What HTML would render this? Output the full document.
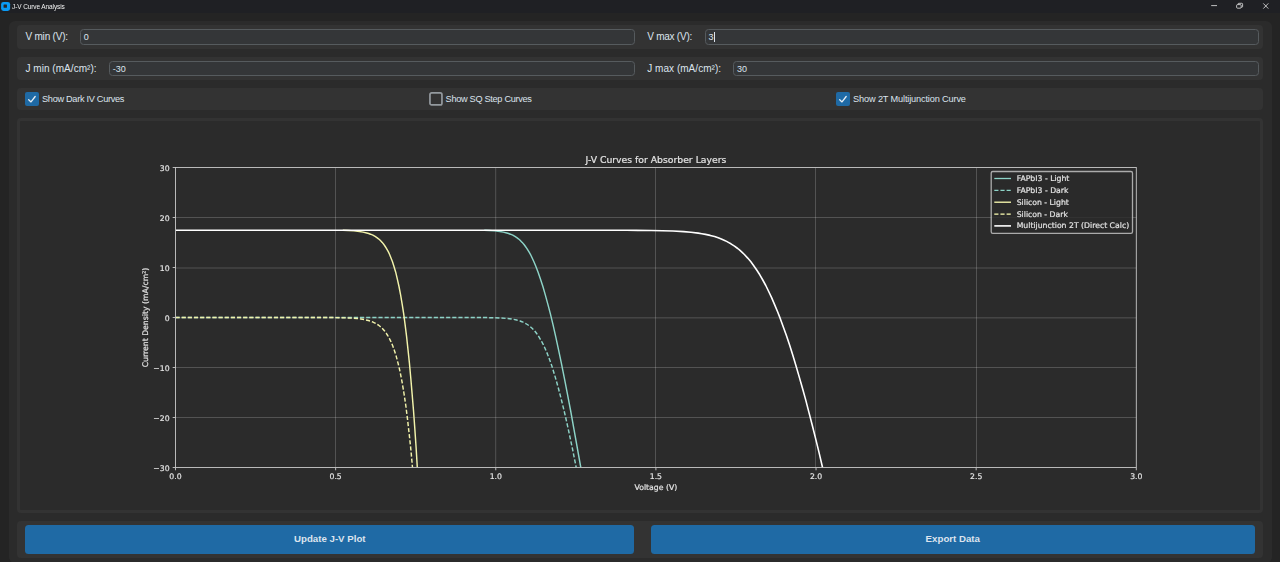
<!DOCTYPE html>
<html lang="en">
<head>
<meta charset="utf-8">
<title>J-V Curve Analysis</title>
<style>
*{box-sizing:border-box;margin:0;padding:0}
html,body{width:1280px;height:562px;overflow:hidden;background:#242424}
body{position:relative;font-family:"Liberation Sans",Arial,sans-serif;color:#dce4ee}
.abs{position:absolute}
.titlebar{left:0;top:0;width:1280px;height:12.5px;background:#1f2024}
.tb-icon{left:1.1px;top:1.9px;width:9px;height:9px;border:2.5px solid #0a9bf5;border-radius:2.6px;background:#2a2322}
.tb-title{left:12.4px;top:2.6px;font-size:6.5px;line-height:8px;color:#f2f2f2;white-space:nowrap;letter-spacing:-0.1px;will-change:transform}
.outer{left:8.8px;top:21.1px;width:1263.2px;height:541.9px;background:#2b2b2b;border-radius:6px}
.row{left:17px;width:1246px;background:#333333;border-radius:4px}
.lbl{font-size:10px;line-height:12px;white-space:nowrap;color:#dce4ee}
.entry{height:15.4px;background:#343638;border:1px solid #565b5e;border-radius:3.5px;font-size:9px;line-height:13.4px;padding-left:2.8px;padding-top:0.8px;color:#dce4ee;white-space:nowrap}
.cb{width:13.6px;height:13.6px;border-radius:2px}
.cb.on{background:#1f6aa5}
.cb.off{border:1.7px solid #949a9f}
.cblbl{font-size:9.2px;line-height:12px;white-space:nowrap;color:#dce4ee}
.btn{top:524.9px;height:28.8px;background:#1f6aa5;border-radius:3.5px;font-weight:bold;font-size:9.7px;line-height:28.9px;text-align:center;color:#dce4ee;white-space:nowrap}
.plotframe{left:17px;top:118.2px;width:1246px;height:394.7px;background:#333333;border-radius:4px}
.canvas{left:20px;top:121px;width:1240px;height:389px;background:#2b2b2b;border-radius:1px}
svg.plot{position:absolute;left:0;top:0;will-change:transform}
</style>
</head>
<body>
<div class="abs titlebar"></div>
<svg class="abs" style="left:0;top:0" width="12" height="13" viewBox="0 0 12 13"><rect x="1.1" y="1.9" width="9" height="9" rx="2.4" fill="#0a9bf5"/><rect x="3.55" y="4.6" width="3.4" height="3.2" rx="0.5" fill="#2a2525"/></svg>
<div class="abs tb-title">J-V Curve Analysis</div>
<svg class="abs" style="left:1208px;top:0" width="72" height="13" viewBox="0 0 72 13" fill="none" stroke="#e8e8e8" stroke-width="0.8">
  <path d="M3.2,5.6 H9"/>
  <rect x="28.6" y="4.6" width="4.6" height="3.6" rx="1"/>
  <path d="M30,4.6 V4.2 a0.9,0.9 0 0 1 0.9,-0.9 H33.7 a0.9,0.9 0 0 1 0.9,0.9 V6.4 a0.9,0.9 0 0 1 -0.9,0.9 H33.3"/>
  <path d="M55.3,3.4 L60.3,8.6 M60.3,3.4 L55.3,8.6"/>
</svg>

<div class="abs outer"></div>

<!-- row 1 -->
<div class="abs row" style="top:25.2px;height:23.5px"></div>
<div class="abs lbl" style="left:25.4px;top:31.4px;letter-spacing:-0.19px">V min (V):</div>
<div class="abs entry" style="left:80px;top:29.2px;width:554.8px">0</div>
<div class="abs lbl" style="left:647.2px;top:31.4px;letter-spacing:-0.24px">V max (V):</div>
<div class="abs entry" style="left:704.6px;top:29.2px;width:554px">3<span style="display:inline-block;width:0.8px;height:10px;background:#dce4ee;vertical-align:-1.6px;margin-left:0.6px"></span></div>

<!-- row 2 -->
<div class="abs row" style="top:56.8px;height:23.4px"></div>
<div class="abs lbl" style="left:25.4px;top:63px;letter-spacing:0.05px">J min (mA/cm²):</div>
<div class="abs entry" style="left:109px;top:60.8px;width:525.8px">-30</div>
<div class="abs lbl" style="left:647.2px;top:63px;letter-spacing:0.04px">J max (mA/cm²):</div>
<div class="abs entry" style="left:733.2px;top:60.8px;width:525.4px">30</div>

<!-- row 3 -->
<div class="abs row" style="top:88.1px;height:21.8px"></div>
<div class="abs cb on" style="left:25.2px;top:92.2px"></div>
<svg class="abs" style="left:25.2px;top:92.2px" width="13.6" height="13.6" viewBox="0 0 13.6 13.6"><path d="M3.7,7.8 L6.0,9.9 L10.2,4.5" fill="none" stroke="#e9eff5" stroke-width="1.3" stroke-linecap="round" stroke-linejoin="round"/></svg>
<div class="abs cblbl" style="left:42px;top:93px;letter-spacing:-0.3px">Show Dark IV Curves</div>
<svg class="abs" style="left:428.9px;top:92.2px" width="14" height="14" viewBox="0 0 14 14"><rect x="0.95" y="0.95" width="12" height="12" rx="1.7" fill="none" stroke="#949a9f" stroke-width="1.7"/></svg>
<div class="abs cblbl" style="left:445.6px;top:93px;letter-spacing:-0.31px">Show SQ Step Curves</div>
<div class="abs cb on" style="left:836.3px;top:92.2px"></div>
<svg class="abs" style="left:836.3px;top:92.2px" width="13.6" height="13.6" viewBox="0 0 13.6 13.6"><path d="M3.7,7.8 L6.0,9.9 L10.2,4.5" fill="none" stroke="#e9eff5" stroke-width="1.3" stroke-linecap="round" stroke-linejoin="round"/></svg>
<div class="abs cblbl" style="left:853.1px;top:93px;letter-spacing:-0.15px">Show 2T Multijunction Curve</div>

<!-- plot -->
<div class="abs plotframe"></div>
<div class="abs canvas"></div>
<svg class="plot" width="1280" height="562" viewBox="0 0 1280 562">
<g stroke="#ffffff" stroke-opacity="0.28" stroke-width="0.7" fill="none">
<path d="M335.5,167.5 V467.5"/>
<path d="M495.7,167.5 V467.5"/>
<path d="M655.5,167.5 V467.5"/>
<path d="M815.5,167.5 V467.5"/>
<path d="M976.5,167.5 V467.5"/>
<path d="M175.5,217.5 H1136.3"/>
<path d="M175.5,268.0 H1136.3"/>
<path d="M175.5,317.85 H1136.3"/>
<path d="M175.5,367.5 H1136.3"/>
<path d="M175.5,417.5 H1136.3"/>
</g>
<clipPath id="ax"><rect x="175.5" y="167.5" width="960.8" height="300.0"/></clipPath>
<g clip-path="url(#ax)" fill="none" stroke-linejoin="round">
<path d="M484.3,230.3 L489.4,230.5 L494.6,230.9 L499.8,231.5 L503.3,232.1 L506.9,233.0 L508.6,233.5 L510.4,234.2 L512.8,235.2 L514.9,236.4 L516.8,237.6 L518.4,238.8 L519.8,240.0 L522.2,242.4 L524.2,244.8 L525.1,246.0 L526.8,248.4 L529.0,251.9 L530.4,254.3 L531.6,256.7 L533.8,261.5 L535.8,266.2 L538.1,272.2 L540.6,279.4 L542.9,286.5 L545.3,294.9 L547.9,304.4 L550.4,313.9 L553.0,324.7 L555.7,336.6 L558.5,349.7 L561.3,362.8 L564.4,378.3 L567.4,393.8 L570.6,410.5 L573.8,428.4 L580.8,467.5" stroke="#8dd3c7" stroke-width="1.45"/>
<path d="M175.5,317.5 L452.9,317.5 L475.2,317.5 L487.2,317.6 L494.0,317.8 L500.9,318.0 L506.1,318.4 L509.6,318.7 L513.1,319.3 L516.6,320.0 L518.3,320.5 L520.1,321.0 L521.9,321.7 L523.8,322.5 L525.7,323.5 L528.1,325.0 L530.1,326.5 L531.8,328.0 L533.3,329.5 L534.7,331.0 L536.5,333.3 L538.1,335.5 L539.5,337.8 L541.3,340.8 L542.9,343.8 L544.3,346.8 L546.0,350.6 L547.6,354.4 L549.0,358.1 L550.7,362.6 L552.2,367.1 L555.2,376.9 L558.4,388.2 L561.7,401.0 L565.2,415.3 L568.7,431.1 L572.4,448.4 L576.2,467.5" stroke="#8dd3c7" stroke-width="1.45" stroke-dasharray="4.15 2.0"/>
<path d="M342.8,230.3 L348.3,230.5 L353.9,230.9 L359.4,231.5 L363.1,232.1 L366.8,233.0 L368.7,233.5 L370.5,234.2 L372.9,235.2 L375.1,236.4 L376.9,237.6 L378.5,238.8 L379.9,240.0 L381.1,241.2 L382.2,242.4 L384.1,244.8 L384.9,246.0 L386.4,248.4 L388.4,251.9 L389.5,254.3 L390.5,256.7 L392.4,261.5 L393.9,266.2 L395.7,272.2 L397.4,279.4 L399.0,286.5 L400.6,294.9 L402.2,304.4 L403.7,313.9 L405.1,324.7 L406.6,336.6 L408.0,349.7 L409.4,362.8 L410.8,378.3 L412.1,393.8 L413.5,410.5 L414.8,428.4 L416.1,447.5 L417.3,467.5" stroke="#f2f3ab" stroke-width="1.45"/>
<path d="M175.5,317.5 L316.6,317.5 L335.1,317.6 L346.1,317.9 L351.7,318.1 L357.2,318.5 L360.9,319.0 L364.6,319.6 L368.3,320.5 L370.2,321.0 L372.1,321.7 L374.4,322.8 L375.9,323.5 L377.1,324.3 L378.3,325.0 L380.2,326.5 L381.9,328.0 L383.3,329.5 L384.6,331.0 L386.3,333.3 L387.7,335.5 L389.0,337.8 L390.2,340.1 L391.6,343.1 L392.8,346.1 L393.9,349.1 L394.9,352.1 L396.1,355.9 L397.1,359.6 L398.1,363.4 L399.2,367.9 L400.2,372.4 L402.1,382.2 L404.0,393.5 L405.8,405.5 L407.5,419.1 L409.2,434.1 L410.9,449.9 L412.5,467.5" stroke="#f2f3ab" stroke-width="1.45" stroke-dasharray="4.15 2.0"/>
<path d="M175.5,230.2 L587.4,230.2 L626.6,230.3 L651.5,230.5 L662.2,230.7 L673.0,231.0 L683.7,231.6 L690.9,232.3 L698.2,233.1 L701.8,233.7 L705.5,234.4 L710.2,235.4 L714.6,236.6 L718.2,237.8 L721.3,239.0 L724.1,240.2 L726.6,241.4 L728.8,242.6 L730.9,243.8 L734.5,246.1 L737.7,248.5 L739.2,249.7 L741.9,252.1 L744.4,254.5 L747.7,258.1 L750.7,261.6 L753.4,265.2 L756.7,270.0 L759.8,274.8 L762.5,279.5 L765.8,285.5 L768.7,291.5 L771.5,297.4 L774.6,304.6 L777.6,311.7 L780.4,318.9 L783.4,327.2 L786.4,335.6 L789.6,345.1 L792.6,354.6 L795.9,365.4 L799.0,376.1 L802.4,388.0 L805.7,399.9 L808.8,411.9 L812.2,425.0 L815.5,438.1 L819.0,452.4 L822.6,467.7" stroke="#ffffff" stroke-width="1.6"/>
</g>
<rect x="175.5" y="167.5" width="960.8" height="300.0" fill="none" stroke="#c8c8c8" stroke-width="0.9"/>
<g stroke="#c8c8c8" stroke-width="0.9">
<path d="M175.5,467.5 v2.8"/>
<path d="M335.6333333333333,467.5 v2.8"/>
<path d="M495.76666666666665,467.5 v2.8"/>
<path d="M655.8999999999999,467.5 v2.8"/>
<path d="M816.0333333333333,467.5 v2.8"/>
<path d="M976.1666666666666,467.5 v2.8"/>
<path d="M1136.2999999999997,467.5 v2.8"/>
<path d="M175.5,167.5 h-2.8"/>
<path d="M175.5,217.5 h-2.8"/>
<path d="M175.5,267.5 h-2.8"/>
<path d="M175.5,317.5 h-2.8"/>
<path d="M175.5,367.5 h-2.8"/>
<path d="M175.5,417.5 h-2.8"/>
<path d="M175.5,467.5 h-2.8"/>
</g>
<g font-family="'DejaVu Sans', sans-serif" font-size="7.73" fill="#e4e4e4" stroke="#e4e4e4" stroke-width="0.2" stroke-linejoin="round">
<text x="175.5" y="479.2" text-anchor="middle">0.0</text>
<text x="335.6333333333333" y="479.2" text-anchor="middle">0.5</text>
<text x="495.76666666666665" y="479.2" text-anchor="middle">1.0</text>
<text x="655.8999999999999" y="479.2" text-anchor="middle">1.5</text>
<text x="816.0333333333333" y="479.2" text-anchor="middle">2.0</text>
<text x="976.1666666666666" y="479.2" text-anchor="middle">2.5</text>
<text x="1136.2999999999997" y="479.2" text-anchor="middle">3.0</text>
<text x="169.6" y="171.1" text-anchor="end">30</text>
<text x="169.6" y="221.1" text-anchor="end">20</text>
<text x="169.6" y="271.1" text-anchor="end">10</text>
<text x="169.6" y="321.1" text-anchor="end">0</text>
<text x="169.6" y="371.1" text-anchor="end">−10</text>
<text x="169.6" y="421.1" text-anchor="end">−20</text>
<text x="169.6" y="471.1" text-anchor="end">−30</text>
<text x="655.9" y="489.8" text-anchor="middle">Voltage (V)</text>
<text transform="translate(148.2,317.5) rotate(-90)" text-anchor="middle">Current Density (mA/cm²)</text>
<text x="655.9" y="163.1" text-anchor="middle" font-size="9.28">J-V Curves for Absorber Layers</text>
</g>
<rect x="991.2" y="171.5" width="141.3" height="61.8" rx="1.6" fill="#2b2b2b" fill-opacity="0.8" stroke="#cccccc" stroke-opacity="0.8" stroke-width="1.3"/>
<g font-family="'DejaVu Sans', sans-serif" font-size="7.73" fill="#e4e4e4" stroke="#e4e4e4" stroke-width="0.2" stroke-linejoin="round">
<path d="M994.3,178.50 H1011" stroke="#8dd3c7" stroke-width="1.3" fill="none"/>
<text x="1016.7" y="181.00">FAPbI3 - Light</text>
<path d="M994.3,190.35 H1011" stroke="#8dd3c7" stroke-width="1.3" stroke-dasharray="4.15 2.0" fill="none"/>
<text x="1016.7" y="192.85">FAPbI3 - Dark</text>
<path d="M994.3,202.20 H1011" stroke="#feffb3" stroke-width="1.3" fill="none"/>
<text x="1016.7" y="204.70">Silicon - Light</text>
<path d="M994.3,214.05 H1011" stroke="#feffb3" stroke-width="1.3" stroke-dasharray="4.15 2.0" fill="none"/>
<text x="1016.7" y="216.55">Silicon - Dark</text>
<path d="M994.3,225.90 H1011" stroke="#ffffff" stroke-width="1.6" fill="none"/>
<text x="1016.7" y="228.40">Multijunction 2T (Direct Calc)</text>
</g>
</svg>

<!-- buttons -->
<div class="abs row" style="top:521px;height:36.7px"></div>
<div class="abs btn" style="left:25.4px;width:608.8px">Update J-V Plot</div>
<div class="abs btn" style="left:651px;width:603.6px">Export Data</div>
</body>
</html>
